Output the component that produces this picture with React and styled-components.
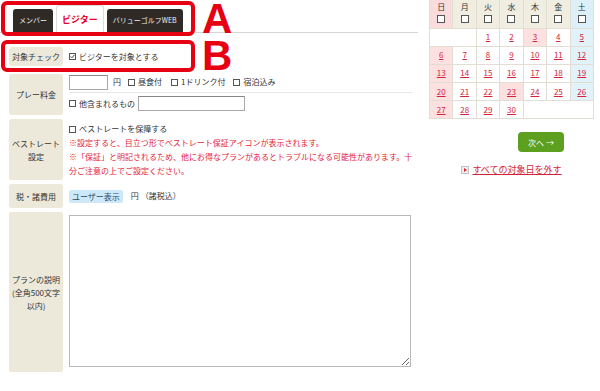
import styled, { createGlobalStyle, css } from 'styled-components';

const GlobalStyle = createGlobalStyle`
  html, body {
    margin: 0;
    padding: 0;
    background: #fff;
  }
  body {
    font-family: "Noto Sans CJK JP", "Noto Sans", sans-serif;
    color: #333;
  }
  * {
    box-sizing: border-box;
  }
`;

const RED = '#e60012';
const LINK_RED = '#d42339';

const Page = styled.div`
  position: relative;
  display: flex;
  width: 600px;
  height: 391px;
  overflow: hidden;
`;

const Main = styled.div`
  width: 418px;
  flex: 0 0 418px;
`;

const TabBar = styled.div`
  display: flex;
  align-items: flex-end;
  gap: 3px;
  height: 33px;
  padding-left: 13px;
  border-bottom: 1px solid #d4d4d4;
`;

const Tab = styled.div`
  height: 23px;
  padding: 0 6px;
  border-radius: 3px 3px 0 0;
  background: #2f2a26;
  color: #f2f2f2;
  font-size: 7px;
  line-height: 23px;
  white-space: nowrap;

  ${(p) =>
    p.$active &&
    css`
      height: 28px;
      line-height: 27px;
      padding: 0 5px;
      margin-bottom: -1px;
      background: #fff;
      color: #e4002b;
      font-size: 9px;
      font-weight: bold;
      border: 1px solid #ddd;
      border-bottom: none;
    `}
`;

const Form = styled.div`
  display: flex;
  flex-direction: column;
  gap: 4px;
  padding-top: 14px;
`;

const Row = styled.div`
  display: flex;
  gap: 6px;
  margin-bottom: ${(p) => p.$after || 0}px;
`;

const Label = styled.div`
  flex: 0 0 54px;
  margin-left: 9px;
  min-height: ${(p) => p.$h}px;
  background: #ede9da;
  border-radius: 3px;
  display: flex;
  align-items: center;
  justify-content: center;
  text-align: center;
  font-size: 8px;
  line-height: 13px;
  color: #333;
`;

const Content = styled.div`
  flex: 1;
  min-width: 0;
  padding-right: 6px;
  font-size: 8px;
  line-height: 14px;
  display: flex;
  flex-direction: column;
  justify-content: ${(p) => p.$align || 'flex-start'};
  padding-top: ${(p) => p.$top || 0}px;
`;

const Line = styled.div`
  display: flex;
  align-items: center;
  height: ${(p) => p.$h || 14}px;
  margin-top: ${(p) => p.$top || 0}px;
  white-space: nowrap;
`;

const Divider = styled.div`
  height: 1px;
  margin-top: 2px;
  background: #e6e6e6;
`;

const TextInput = styled.span`
  display: inline-block;
  width: ${(p) => p.$w}px;
  height: 15px;
  border: 1px solid #a9a9a9;
  border-top-color: #888;
  background: #fff;
  margin-right: ${(p) => p.$mr || 0}px;
  margin-left: ${(p) => p.$ml || 0}px;
`;

const Opt = styled.span`
  display: inline-flex;
  align-items: center;
  margin-left: ${(p) => p.$ml || 0}px;
`;

const Box = styled.span`
  position: relative;
  display: inline-block;
  width: 7px;
  height: 7px;
  border: 1px solid #555;
  background: #fff;
  margin-right: 3px;

  svg {
    position: absolute;
    left: 0;
    top: 0;
  }
`;

const Check = ({ checked }) => (
  <Box>
    {checked && (
      <svg width="5" height="5" viewBox="0 0 5 5">
        <path d="M0.6 2.4 L2 3.8 L4.5 0.8" fill="none" stroke="#333" strokeWidth="0.9" />
      </svg>
    )}
  </Box>
);

const Warn = styled.div`
  color: #e5243b;
  white-space: nowrap;
`;

const Badge = styled.span`
  display: inline-block;
  height: 13px;
  line-height: 13px;
  padding: 0 3px;
  background: #cde8f8;
  color: #2b4a66;
  border-radius: 2px;
  margin-right: 8px;
`;

const TextArea = styled.textarea`
  display: block;
  width: 342px;
  height: 152px;
  margin: 3px 0 0 0;
  border: 1px solid #b9b9b9;
  background: #fff;
  resize: both;
  font-family: inherit;
`;

const Side = styled.div`
  flex: 0 0 172px;
  padding-left: 11px;
`;

const Cal = styled.table`
  width: 165px;
  border-collapse: collapse;
  table-layout: fixed;
`;

const Th = styled.th`
  height: 28px;
  padding: 0;
  border: 1px solid #e2ded3;
  border-top: none;
  background: ${(p) => p.$bg};
  font-size: 8px;
  font-weight: normal;
  line-height: 11px;
  color: #333;
  vertical-align: top;
  padding-top: 1px;
`;

const ThBox = styled.span`
  display: block;
  width: 8px;
  height: 8px;
  margin: 3px auto 0;
  border: 1px solid #555;
  background: #fff;
`;

const Td = styled.td`
  height: 18.2px;
  padding: 0;
  border: 1px solid #e2ded3;
  background: ${(p) => p.$bg || '#fff'};
  text-align: center;
  font-size: 8px;
  line-height: 10px;
`;

const DateLink = styled.a`
  color: ${LINK_RED};
  text-decoration: underline;
`;

const ButtonRow = styled.div`
  display: flex;
  justify-content: flex-end;
  padding-right: 30px;
  margin-top: 13px;
`;

const NextButton = styled.button`
  width: 46px;
  height: 20px;
  padding: 0;
  border: none;
  border-radius: 4px;
  background: #5d9f1e;
  color: #fff;
  font-family: inherit;
  font-size: 8px;
`;

const ClearLink = styled.div`
  display: flex;
  justify-content: center;
  align-items: center;
  margin-top: 12px;
  font-size: 9px;
  line-height: 12px;
  color: ${LINK_RED};
  text-decoration: underline;
`;

const LinkIcon = styled.span`
  position: relative;
  display: inline-block;
  width: 8px;
  height: 8px;
  margin-right: 3px;
  background: #eee;
  border: 1px solid #c4c4c4;

  &::after {
    content: '';
    position: absolute;
    left: 2px;
    top: 1px;
    border-left: 3px solid ${LINK_RED};
    border-top: 2px solid transparent;
    border-bottom: 2px solid transparent;
  }
`;

const Frame = styled.div`
  position: absolute;
  left: 1px;
  top: ${(p) => p.$top}px;
  width: 194px;
  height: ${(p) => p.$h}px;
  border: 4px solid ${RED};
  border-radius: 6px;
  pointer-events: none;
`;

const Mark = styled.div`
  position: absolute;
  left: 202px;
  top: ${(p) => p.$top}px;
  font-family: "Liberation Sans", Arial, sans-serif;
  font-weight: bold;
  font-size: 42px;
  line-height: 32px;
  color: ${RED};
  pointer-events: none;
`;

const DAYS = [
  { name: '日', bg: '#fadcdc' },
  { name: '月', bg: '#f0ede1' },
  { name: '火', bg: '#f0ede1' },
  { name: '水', bg: '#f0ede1' },
  { name: '木', bg: '#f0ede1' },
  { name: '金', bg: '#f0ede1' },
  { name: '土', bg: '#ddf0fa' },
];

const WEEKS = [
  [{ span: 2 }, 1, 2, 3, 4, 5],
  [6, 7, 8, 9, 10, 11, 12],
  [13, 14, 15, 16, 17, 18, 19],
  [20, 21, 22, 23, 24, 25, 26],
  [27, 28, 29, 30, { span: 3 }],
];

const HOLIDAYS = [3, 23];

const cellBg = (day, col) => {
  if (HOLIDAYS.includes(day) || col === 0) return '#fde0e0';
  if (col === 6) return '#e1f2fb';
  return '#fff';
};

const Calendar = () => (
  <Cal>
    <thead>
      <tr>
        {DAYS.map((d) => (
          <Th key={d.name} $bg={d.bg}>
            {d.name}
            <ThBox />
          </Th>
        ))}
      </tr>
    </thead>
    <tbody>
      {WEEKS.map((week, i) => {
        let col = 0;
        return (
          <tr key={i}>
            {week.map((day, j) => {
              if (typeof day === 'object') {
                col += day.span;
                return <Td key={j} colSpan={day.span} />;
              }
              const bg = cellBg(day, col);
              col += 1;
              return (
                <Td key={j} $bg={bg}>
                  <DateLink>{day}</DateLink>
                </Td>
              );
            })}
          </tr>
        );
      })}
    </tbody>
  </Cal>
);

const App = () => (
  <>
    <GlobalStyle />
    <Page>
      <Main>
        <TabBar>
          <Tab>メンバー</Tab>
          <Tab $active>ビジター</Tab>
          <Tab>バリューゴルフWEB</Tab>
        </TabBar>
        <Form>
          <Row $after={4}>
            <Label $h={19}>対象チェック</Label>
            <Content $align="center">
              <Line>
                <Check checked />
                ビジターを対象とする
              </Line>
            </Content>
          </Row>
          <Row>
            <Label $h={41}>プレー料金</Label>
            <Content>
              <Line $h={16}>
                <TextInput $w={39} $mr={5} />
                円
                <Opt $ml={7}>
                  <Check />
                  昼食付
                </Opt>
                <Opt $ml={9}>
                  <Check />
                  1ドリンク付
                </Opt>
                <Opt $ml={8}>
                  <Check />
                  宿泊込み
                </Opt>
              </Line>
              <Divider />
              <Line $h={15} $top={3}>
                <Check />
                他含まれるもの
                <TextInput $w={107} $ml={3} />
              </Line>
            </Content>
          </Row>
          <Row>
            <Label $h={61}>
              ベストレート
              <br />
              設定
            </Label>
            <Content $top={3}>
              <Line>
                <Check />
                ベストレートを保障する
              </Line>
              <Warn>※設定すると、目立つ形でベストレート保証アイコンが表示されます。</Warn>
              <Warn>
                ※「保証」と明記されるため、他にお得なプランがあるとトラブルになる可能性があります。十
                <br />
                分ご注意の上でご設定ください。
              </Warn>
            </Content>
          </Row>
          <Row>
            <Label $h={24}>税・諸費用</Label>
            <Content $align="center">
              <Line>
                <Badge>ユーザー表示</Badge>
                円 （諸税込）
              </Line>
            </Content>
          </Row>
          <Row>
            <Label $h={160}>
              プランの説明
              <br />
              (全角500文字
              <br />
              以内)
            </Label>
            <Content>
              <TextArea />
            </Content>
          </Row>
        </Form>
      </Main>
      <Side>
        <Calendar />
        <ButtonRow>
          <NextButton>次へ →</NextButton>
        </ButtonRow>
        <ClearLink>
          <LinkIcon />
          すべての対象日を外す
        </ClearLink>
      </Side>
      <Frame $top={1} $h={35} />
      <Frame $top={40} $h={32} />
      <Mark $top={3}>A</Mark>
      <Mark $top={40}>B</Mark>
    </Page>
  </>
);

export default App;
